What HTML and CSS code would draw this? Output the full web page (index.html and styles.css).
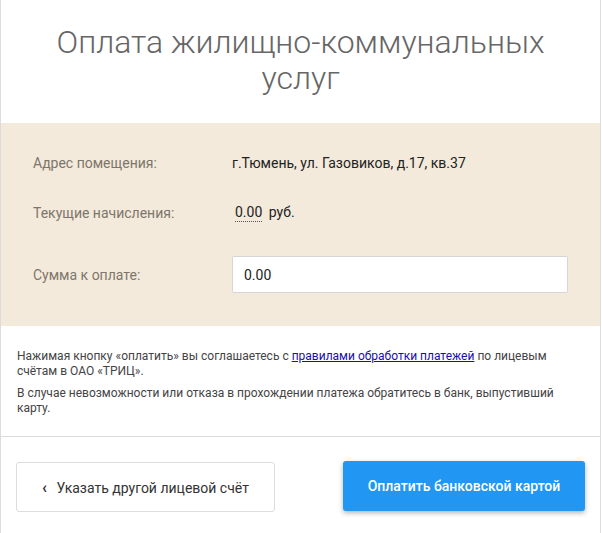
FILE: index.html
```html
<!DOCTYPE html>
<html lang="ru">
<head>
    <meta charset="UTF-8">
    <meta name="viewport" content="width=device-width, initial-scale=1.0">
    <title>Оплата жилищно-коммунальных услуг</title>
    <link rel="stylesheet" href="styles.css">
</head>
<body>

    <div class="card">
        <h1 class="card-title">Оплата жилищно-коммунальных услуг</h1>

        <!-- Данные по лицевому счёту -->
        <div class="details">
            <div class="row row-address">
                <span class="label">Адрес помещения:</span>
                <span class="value">г.Тюмень, ул. Газовиков, д.17, кв.37</span>
            </div>
            <div class="row row-charges">
                <span class="label">Текущие начисления:</span>
                <span class="value"><span class="amount">0.00</span> руб.</span>
            </div>
            <div class="row row-sum">
                <label class="label" for="summa">Сумма к оплате:</label>
                <input type="text" id="summa" class="sum-input" value="0.00">
            </div>
        </div>

        <!-- Примечания -->
        <div class="notes">
            <p>Нажимая кнопку «оплатить» вы соглашаетесь с <a href="#">правилами обработки платежей</a> по лицевым счётам в ОАО «ТРИЦ».</p>
            <p>В случае невозможности или отказа в прохождении платежа обратитесь в банк, выпустивший карту.</p>
        </div>

        <!-- Кнопки -->
        <div class="actions">
            <button class="btn btn-back"><span class="chevron">‹</span> Указать другой лицевой счёт</button>
            <button class="btn btn-pay">Оплатить банковской картой</button>
        </div>
    </div>

</body>
</html>
```

FILE: styles.css
```css
* {
    margin: 0;
    padding: 0;
    box-sizing: border-box;
    font-family: Roboto, 'Liberation Sans', sans-serif;
}

body {
    background-color: #fff;
}

.card {
    width: 601px;
    border-left: 1px solid #dcdcdc;
    border-right: 1px solid #dcdcdc;
    background-color: #fff;
}

.card-title {
    padding: 24px 40px 27px;
    font-size: 32px;
    font-weight: 300;
    line-height: 36px;
    color: #666;
    text-align: center;
}

.details {
    background-color: #f3eadb;
    padding: 22px 32px 33px;
}

.row {
    display: flex;
    align-items: center;
    font-size: 14px;
}

.row-address, .row-charges {
    height: 36px;
}

.row-address {
    margin-bottom: 14px;
}

.row-charges {
    margin-bottom: 25px;
}

.label {
    width: 199px;
    color: #7d766b;
}

.value {
    color: #222;
}

.amount {
    display: inline-block;
    margin: 0 3px;
    border-bottom: 1px dotted #555;
    line-height: 17px;
}

.sum-input {
    width: 336px;
    height: 37px;
    padding: 0 11px;
    border: 1px solid #d6d6d6;
    border-radius: 2px;
    font-size: 14px;
    color: #222;
    background-color: #fff;
}

.notes {
    padding: 23px 16px 20px;
    border-bottom: 1px solid #dcdcdc;
    font-size: 12px;
    line-height: 15px;
    color: #444;
}

.notes p + p {
    margin-top: 7px;
}

.notes a {
    color: #1a0dab;
}

.actions {
    display: flex;
    justify-content: space-between;
    align-items: center;
    padding: 24px 15px 24px;
}

.btn {
    height: 50px;
    font-size: 14px;
    border-radius: 3px;
    cursor: pointer;
}

.btn-back {
    width: 259px;
    margin-top: 1px;
    background-color: #fff;
    border: 1px solid #ddd;
    color: #333;
}

.chevron {
    font-weight: 700;
    font-size: 16px;
    margin-right: 6px;
}

.btn-pay {
    width: 242px;
    margin-top: -1px;
    background-color: #2196f3;
    border: none;
    color: #fff;
    font-weight: 500;
    box-shadow: 0 2px 5px rgba(0, 0, 0, 0.3);
}
```
